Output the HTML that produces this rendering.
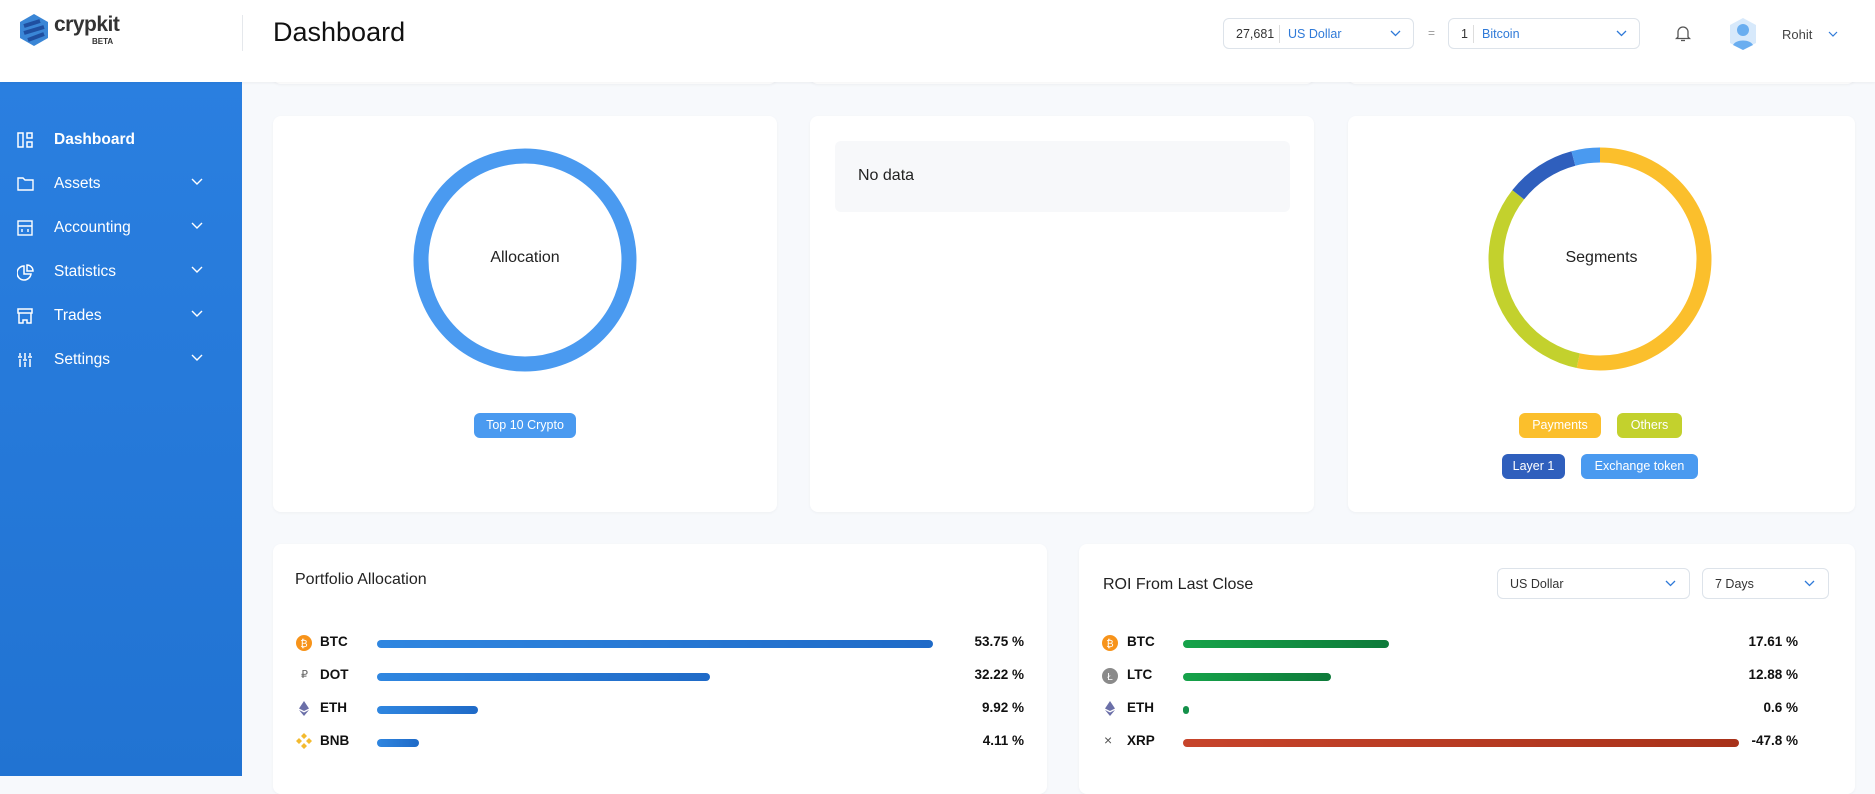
<!DOCTYPE html>
<html><head><meta charset="utf-8"><style>
*{box-sizing:border-box;margin:0;padding:0}
body{width:1875px;height:776px;overflow:hidden;background:#f7f9fc;font-family:"Liberation Sans",sans-serif;color:#222;position:relative}
.abs{position:absolute}
.header{left:0;top:0;width:1875px;height:82px;background:#fff;box-shadow:0 1px 3px rgba(0,0,0,.05);z-index:2}
.side{left:0;top:82px;width:242px;height:694px;background:linear-gradient(180deg,#2a7fe0,#2173d2)}
.nav{position:absolute;left:0;width:242px;height:30px;color:#fff;font-size:15.5px}
.nav span{position:absolute;left:54px;top:6px}
.nav svg.i{position:absolute;left:17px;top:7px}
.nav svg.c{position:absolute;left:191px;top:9px}
.card{position:absolute;background:#fff;border-radius:8px;box-shadow:0 1px 3px rgba(0,0,0,.04)}
.pill{position:absolute;border-radius:6px;color:#fff;font-size:12.5px;text-align:center;line-height:25px}
.sel{position:absolute;border:1px solid #dde3ea;border-radius:6px;background:#fff;font-size:12.5px}
.row{position:absolute;height:20px;font-size:13.5px;font-weight:bold;color:#111}
.bar{position:absolute;height:8px;border-radius:4px;top:6px}
.pct{position:absolute;font-size:13.5px;font-weight:bold;color:#111;text-align:right}
</style></head><body>
<div class="abs header">
  <svg class="abs" style="left:18px;top:13px" width="32" height="34" viewBox="0 0 32 34"><polygon points="16,1 30,9 30,25 16,33 2,25 2,9" fill="#3a86d6"/><path d="M6 13 L22 8 M6 20 L26 14 M10 27 L26 21" stroke="#1f4fa0" stroke-width="4"/></svg>
  <div class="abs" style="left:54px;top:13px;font-size:21px;color:#333;font-weight:bold;letter-spacing:-.5px">crypkit</div>
  <div class="abs" style="left:92px;top:37px;font-size:8px;color:#333;font-weight:bold">BETA</div>
  <div class="abs" style="left:242px;top:15px;width:1px;height:36px;background:#e5e8ec"></div>
  <div class="abs" style="left:273px;top:17px;font-size:27px;color:#111">Dashboard</div>
  <div class="sel" style="left:1223px;top:18px;width:191px;height:31px"><span class="abs" style="left:12px;top:8px;color:#333">27,681</span><span class="abs" style="left:55px;top:6px;width:1px;height:18px;background:#ddd"></span><span class="abs" style="left:64px;top:8px;color:#2f7ad8">US Dollar</span><svg class="abs" style="left:166px;top:11px" width="11" height="7"><path d="M1 1l4.5 4.5L10 1" stroke="#2f7ad8" fill="none" stroke-width="1.3"/></svg></div>
  <div class="abs" style="left:1428px;top:26px;font-size:12px;color:#999">=</div>
  <div class="sel" style="left:1448px;top:18px;width:192px;height:31px"><span class="abs" style="left:12px;top:8px;color:#333">1</span><span class="abs" style="left:24px;top:6px;width:1px;height:18px;background:#ddd"></span><span class="abs" style="left:33px;top:8px;color:#2f7ad8">Bitcoin</span><svg class="abs" style="left:167px;top:11px" width="11" height="7"><path d="M1 1l4.5 4.5L10 1" stroke="#2f7ad8" fill="none" stroke-width="1.3"/></svg></div>
  <svg class="abs" style="left:1675px;top:24px" width="16" height="18" viewBox="0 0 16 18"><path d="M3 13V8a5 5 0 0110 0v5l1.5 1.5h-13z" fill="none" stroke="#555" stroke-width="1.3"/><path d="M6 16.5h4" stroke="#555" stroke-width="1.3"/></svg>
  <svg class="abs" style="left:1728px;top:17px" width="30" height="34" viewBox="0 0 30 34"><polygon points="15,1 28,8 28,26 15,33 2,26 2,8" fill="#d7e9fb"/><circle cx="15" cy="13" r="6" fill="#6aaef0"/><path d="M5 28c3-6 17-6 20 0l-10 5z" fill="#6aaef0"/></svg>
  <div class="abs" style="left:1782px;top:27px;font-size:13px;color:#444">Rohit</div>
  <svg class="abs" style="left:1828px;top:31px" width="10" height="6"><path d="M1 1l4 4 4-4" stroke="#2f7ad8" fill="none" stroke-width="1.2"/></svg>
</div>
<div class="abs side">
  <div class="nav" style="top:43px;font-weight:bold"><svg class="i" width="16" height="16" viewBox="0 0 16 16" fill="none" stroke="#fff" stroke-width="1.5"><rect x="1" y="1" width="5" height="14"/><rect x="10" y="1" width="5" height="5"/><rect x="10" y="10" width="5" height="5"/></svg><span>Dashboard</span></div>
  <div class="nav" style="top:87px"><svg class="i" width="17" height="16" viewBox="0 0 17 16" fill="none" stroke="#fff" stroke-width="1.4"><path d="M1 2h5l2 2h8v10H1z"/></svg><span>Assets</span><svg class="c" width="12" height="8"><path d="M1 1l5 5 5-5" stroke="#fff" fill="none" stroke-width="1.4"/></svg></div>
  <div class="nav" style="top:131px"><svg class="i" width="16" height="16" viewBox="0 0 16 16" fill="none" stroke="#fff" stroke-width="1.4"><rect x="1" y="1" width="14" height="14"/><path d="M1 6h14M5 9v3M11 9v3"/></svg><span>Accounting</span><svg class="c" width="12" height="8"><path d="M1 1l5 5 5-5" stroke="#fff" fill="none" stroke-width="1.4"/></svg></div>
  <div class="nav" style="top:175px"><svg class="i" width="17" height="17" viewBox="0 0 17 17" fill="none" stroke="#fff" stroke-width="1.5"><path d="M7 2a7 7 0 107 8H7z"/><path d="M10 1a6 6 0 016 6h-6z"/></svg><span>Statistics</span><svg class="c" width="12" height="8"><path d="M1 1l5 5 5-5" stroke="#fff" fill="none" stroke-width="1.4"/></svg></div>
  <div class="nav" style="top:219px"><svg class="i" width="16" height="16" viewBox="0 0 16 16" fill="none" stroke="#fff" stroke-width="1.5"><rect x="1" y="1" width="14" height="4"/><path d="M2 5v10h4v-3h4v3h4V5"/></svg><span>Trades</span><svg class="c" width="12" height="8"><path d="M1 1l5 5 5-5" stroke="#fff" fill="none" stroke-width="1.4"/></svg></div>
  <div class="nav" style="top:263px"><svg class="i" width="16" height="16" viewBox="0 0 16 16" fill="none" stroke="#fff" stroke-width="1.5"><path d="M3 1v3M3 7v8M8 1v6M8 10v5M13 1v3M13 7v8M1 5h4M6 8h4M11 5h4"/></svg><span>Settings</span><svg class="c" width="12" height="8"><path d="M1 1l5 5 5-5" stroke="#fff" fill="none" stroke-width="1.4"/></svg></div>
</div>
<!-- partial top cards -->
<div class="card" style="left:273px;top:60px;width:504px;height:24px"></div>
<div class="card" style="left:810px;top:60px;width:504px;height:24px"></div>
<div class="card" style="left:1348px;top:60px;width:507px;height:24px"></div>
<!-- row1 -->
<div class="card" style="left:273px;top:116px;width:504px;height:396px">
  <svg class="abs" style="left:138px;top:30px" width="228" height="228"><circle cx="114" cy="114" r="104" fill="none" stroke="#4a9af0" stroke-width="15"/></svg>
  <div class="abs" style="left:0;width:504px;top:133px;text-align:center;font-size:16px;color:#222">Allocation</div>
  <div class="pill" style="left:201px;top:297px;width:102px;background:#4a9af0">Top 10 Crypto</div>
</div>
<div class="card" style="left:810px;top:116px;width:504px;height:396px">
  <div class="abs" style="left:25px;top:25px;width:455px;height:71px;background:#f7f8fa;border-radius:6px"><span class="abs" style="left:23px;top:26px;font-size:16px;color:#222">No data</span></div>
</div>
<div class="card" style="left:1348px;top:116px;width:507px;height:396px">
  <svg class="abs" style="left:138px;top:29px" width="228" height="228"><g transform="rotate(-90 114 114)" fill="none" stroke-width="15">
    <circle cx="114" cy="114" r="104" stroke="#fbbf2c" stroke-dasharray="348.5 1000"/>
    <circle cx="114" cy="114" r="104" stroke="#c3d12d" stroke-dasharray="0 348.5 210.6 1000"/>
    <circle cx="114" cy="114" r="104" stroke="#2f5fbd" stroke-dasharray="0 559.1 67.2 1000"/>
    <circle cx="114" cy="114" r="104" stroke="#4a9af0" stroke-dasharray="0 626.3 27.5 1000"/></g></svg>
  <div class="abs" style="left:0;width:507px;top:133px;text-align:center;font-size:16px;color:#222">Segments</div>
  <div class="pill" style="left:171px;top:297px;width:82px;background:#fbbf2c">Payments</div>
  <div class="pill" style="left:269px;top:297px;width:65px;background:#c3d12d">Others</div>
  <div class="pill" style="left:154px;top:338px;width:63px;background:#2f5fbd">Layer 1</div>
  <div class="pill" style="left:233px;top:338px;width:117px;background:#4a9af0">Exchange token</div>
</div>
<!-- row2 -->
<div class="card" style="left:273px;top:544px;width:774px;height:250px">
  <div class="abs" style="left:22px;top:27px;font-size:16px;color:#222">Portfolio Allocation</div>
</div>
<div class="card" style="left:1079px;top:544px;width:776px;height:250px">
  <div class="abs" style="left:24px;top:32px;font-size:16px;color:#222">ROI From Last Close</div>
  <div class="sel" style="left:418px;top:24px;width:193px;height:31px"><span class="abs" style="left:12px;top:8px;color:#333">US Dollar</span><svg class="abs" style="left:167px;top:11px" width="11" height="7"><path d="M1 1l4.5 4.5L10 1" stroke="#2f7ad8" fill="none" stroke-width="1.3"/></svg></div>
  <div class="sel" style="left:623px;top:24px;width:127px;height:31px"><span class="abs" style="left:12px;top:8px;color:#333">7 Days</span><svg class="abs" style="left:101px;top:11px" width="11" height="7"><path d="M1 1l4.5 4.5L10 1" stroke="#2f7ad8" fill="none" stroke-width="1.3"/></svg></div>
</div>
<!-- portfolio rows -->
<svg class="abs" style="left:296px;top:635px" width="16" height="16"><circle cx="8" cy="8" r="8" fill="#f7931a"/><text x="8" y="12" font-size="10" fill="#fff" text-anchor="middle" font-family="Liberation Sans">₿</text></svg>
<div class="row" style="left:320px;top:634px">BTC</div><div class="bar" style="left:377px;top:640px;width:556px;background:linear-gradient(90deg,#2f86e0,#1f6ac7)"></div><div class="pct" style="left:924px;width:100px;top:634px">53.75 %</div>
<div class="abs" style="left:301px;top:668px;font-size:11px;color:#666">₽</div>
<div class="row" style="left:320px;top:667px">DOT</div><div class="bar" style="left:377px;top:673px;width:333px;background:linear-gradient(90deg,#2f86e0,#1f6ac7)"></div><div class="pct" style="left:924px;width:100px;top:667px">32.22 %</div>
<svg class="abs" style="left:299px;top:701px" width="10" height="15"><path d="M5 0L0 7.5 5 10 10 7.5zM0 9l5 6 5-6-5 2.5z" fill="#6b6fa8"/></svg>
<div class="row" style="left:320px;top:700px">ETH</div><div class="bar" style="left:377px;top:706px;width:101px;background:linear-gradient(90deg,#2f86e0,#1f6ac7)"></div><div class="pct" style="left:924px;width:100px;top:700px">9.92 %</div>
<svg class="abs" style="left:296px;top:733px" width="16" height="16" viewBox="0 0 16 16"><path d="M8 0l3 3-3 3-3-3zM3 5l3 3-3 3-3-3zM13 5l3 3-3 3-3-3zM8 10l3 3-3 3-3-3z" fill="#f3ba2f"/></svg>
<div class="row" style="left:320px;top:733px">BNB</div><div class="bar" style="left:377px;top:739px;width:42px;background:linear-gradient(90deg,#2f86e0,#1f6ac7)"></div><div class="pct" style="left:924px;width:100px;top:733px">4.11 %</div>
<!-- roi rows -->
<svg class="abs" style="left:1102px;top:635px" width="16" height="16"><circle cx="8" cy="8" r="8" fill="#f7931a"/><text x="8" y="12" font-size="10" fill="#fff" text-anchor="middle" font-family="Liberation Sans">₿</text></svg>
<div class="row" style="left:1127px;top:634px">BTC</div><div class="bar" style="left:1183px;top:640px;width:206px;background:linear-gradient(90deg,#16a34a,#0e7a3a)"></div><div class="pct" style="left:1698px;width:100px;top:634px">17.61 %</div>
<svg class="abs" style="left:1102px;top:668px" width="16" height="16"><circle cx="8" cy="8" r="8" fill="#8a8a8a"/><text x="8" y="12" font-size="10" fill="#fff" text-anchor="middle" font-family="Liberation Sans">Ł</text></svg>
<div class="row" style="left:1127px;top:667px">LTC</div><div class="bar" style="left:1183px;top:673px;width:148px;background:linear-gradient(90deg,#16a34a,#0e7a3a)"></div><div class="pct" style="left:1698px;width:100px;top:667px">12.88 %</div>
<svg class="abs" style="left:1105px;top:701px" width="10" height="15"><path d="M5 0L0 7.5 5 10 10 7.5zM0 9l5 6 5-6-5 2.5z" fill="#6b6fa8"/></svg>
<div class="row" style="left:1127px;top:700px">ETH</div><div class="bar" style="left:1183px;top:706px;width:6px;background:#14904a"></div><div class="pct" style="left:1698px;width:100px;top:700px">0.6 %</div>
<div class="abs" style="left:1104px;top:732px;font-size:14px;color:#555">×</div>
<div class="row" style="left:1127px;top:733px">XRP</div><div class="bar" style="left:1183px;top:739px;width:556px;background:linear-gradient(90deg,#c7442b,#a8321a)"></div><div class="pct" style="left:1698px;width:100px;top:733px">-47.8 %</div>
</body></html>
